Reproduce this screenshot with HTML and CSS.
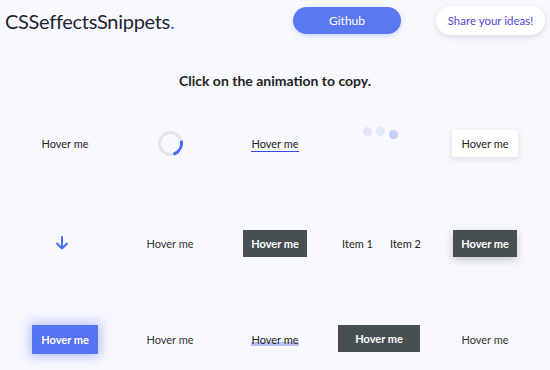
FILE: index.html
```html
<!DOCTYPE html>
<html lang="en">
<head>
    <meta charset="UTF-8">
    <meta name="viewport" content="width=device-width, initial-scale=1.0">
    <title>CSSeffectsSnippets</title>
    <link rel="stylesheet" href="styles.css">
</head>
<body>
    <!-- Header -->
    <header class="header">
        <div class="logo">CSSeffectsSnippets<span class="dot">.</span></div>
        <div class="nav">
            <a class="btn-github" href="#">Github</a>
            <a class="btn-share" href="#">Share your ideas!</a>
        </div>
    </header>

    <h2 class="subtitle">Click on the animation to copy.</h2>

    <!-- Effects grid -->
    <div class="effects">
        <div class="cell"><span class="plain">Hover me</span></div>
        <div class="cell"><div class="spinner"></div></div>
        <div class="cell"><span class="underline">Hover me</span></div>
        <div class="cell">
            <div class="dots">
                <span></span><span></span><span class="up"></span>
            </div>
        </div>
        <div class="cell"><span class="box-white">Hover me</span></div>

        <div class="cell">
            <svg class="arrow" width="14" height="14" viewBox="0 0 14 14">
                <path d="M7 1 V12 M2 7.5 L7 12.5 L12 7.5" fill="none" stroke="#4a6cf7" stroke-width="2" stroke-linecap="round" stroke-linejoin="round"/>
            </svg>
        </div>
        <div class="cell"><span class="plain grey">Hover me</span></div>
        <div class="cell"><span class="box-dark">Hover me</span></div>
        <div class="cell">
            <div class="items"><span>Item 1</span><span>Item 2</span></div>
        </div>
        <div class="cell"><span class="box-dark shadow">Hover me</span></div>

        <div class="cell"><span class="box-blue">Hover me</span></div>
        <div class="cell"><span class="plain grey">Hover me</span></div>
        <div class="cell"><span class="highlight">Hover me</span></div>
        <div class="cell"><span class="box-dark wide">Hover me</span></div>
        <div class="cell"><span class="plain grey">Hover me</span></div>
    </div>
</body>
</html>
```

FILE: styles.css
```css
body {
    margin: 0;
    background-color: #f8f9ff;
    color: #222;
    font-family: 'Lato', 'Noto Sans', Arial, sans-serif;
}

.header {
    display: flex;
    justify-content: space-between;
    align-items: center;
    height: 40px;
    padding: 0 5px;
}

.logo {
    font-size: 20px;
    color: #1e2430;
    letter-spacing: -0.3px;
    margin-top: 1px;
}

.logo .dot {
    color: #3b5bfd;
}

.nav {
    display: flex;
    align-items: center;
    gap: 35px;
}

.nav a {
    text-decoration: none;
    font-size: 12px;
    text-align: center;
    border-radius: 15px;
}

.btn-github {
    background: #5a78f0;
    color: #fff;
    width: 108px;
    line-height: 27px;
    box-shadow: 0 2px 5px rgba(90, 120, 240, 0.25);
}

.btn-share {
    background: #fff;
    color: #5046d6;
    width: 109px;
    line-height: 29px;
    font-size: 11.5px !important;
    box-shadow: 0 2px 6px rgba(0, 0, 0, 0.12);
}

.subtitle {
    margin: 32px 0 0;
    text-align: center;
    font-size: 14px;
    font-weight: bold;
    color: #222;
    line-height: 18px;
}

.effects {
    display: grid;
    grid-template-columns: repeat(5, 105px);
    grid-template-rows: 100px 100px 92px;
    justify-content: center;
    margin-top: 3px;
    font-size: 11px;
}

.cell {
    display: flex;
    align-items: center;
    justify-content: center;
}

.plain.grey {
    color: #333;
}

.spinner {
    width: 19px;
    height: 19px;
    border: 3px solid #e4e5ea;
    border-right-color: #4a6cf7;
    border-radius: 50%;
    transform: rotate(30deg);
}

.underline {
    border-bottom: 1.5px solid #2f4fd8;
    line-height: 12px;
    padding-bottom: 1px;
    margin-top: 3px;
}

.dots {
    display: flex;
    gap: 4px;
    margin-top: -21px;
}

.dots span {
    width: 9px;
    height: 9px;
    border-radius: 50%;
    background: #e2e7fb;
}

.dots span.up {
    background: #c5cff8;
    margin-top: 3px;
}

.box-white {
    background: #fff;
    padding: 0 9px;
    line-height: 27px;
    border-radius: 2px;
    box-shadow: 0 2px 6px rgba(0, 0, 0, 0.12);
}

.arrow {
    margin-left: -6px;
}

.box-dark {
    background: #474f52;
    color: #fff;
    font-weight: bold;
    padding: 0 8px;
    line-height: 27px;
}

.box-dark.shadow {
    box-shadow: 0 3px 8px rgba(0, 0, 0, 0.2);
}

.box-dark.wide {
    padding: 0 17px;
    margin-left: -2px;
    margin-top: -2px;
}

.items {
    display: flex;
    gap: 17px;
    color: #222;
    margin-left: 3px;
}

.box-blue {
    background: #5573f2;
    color: #fff;
    font-weight: bold;
    padding: 0 9px;
    line-height: 29px;
    box-shadow: 0 0 10px 3px rgba(80, 100, 220, 0.35);
    margin-top: 1px;
}

.highlight {
    line-height: 12px;
    background: linear-gradient(transparent 72%, #b7c4f5 72%);
    padding-top: 1px;
}
```
